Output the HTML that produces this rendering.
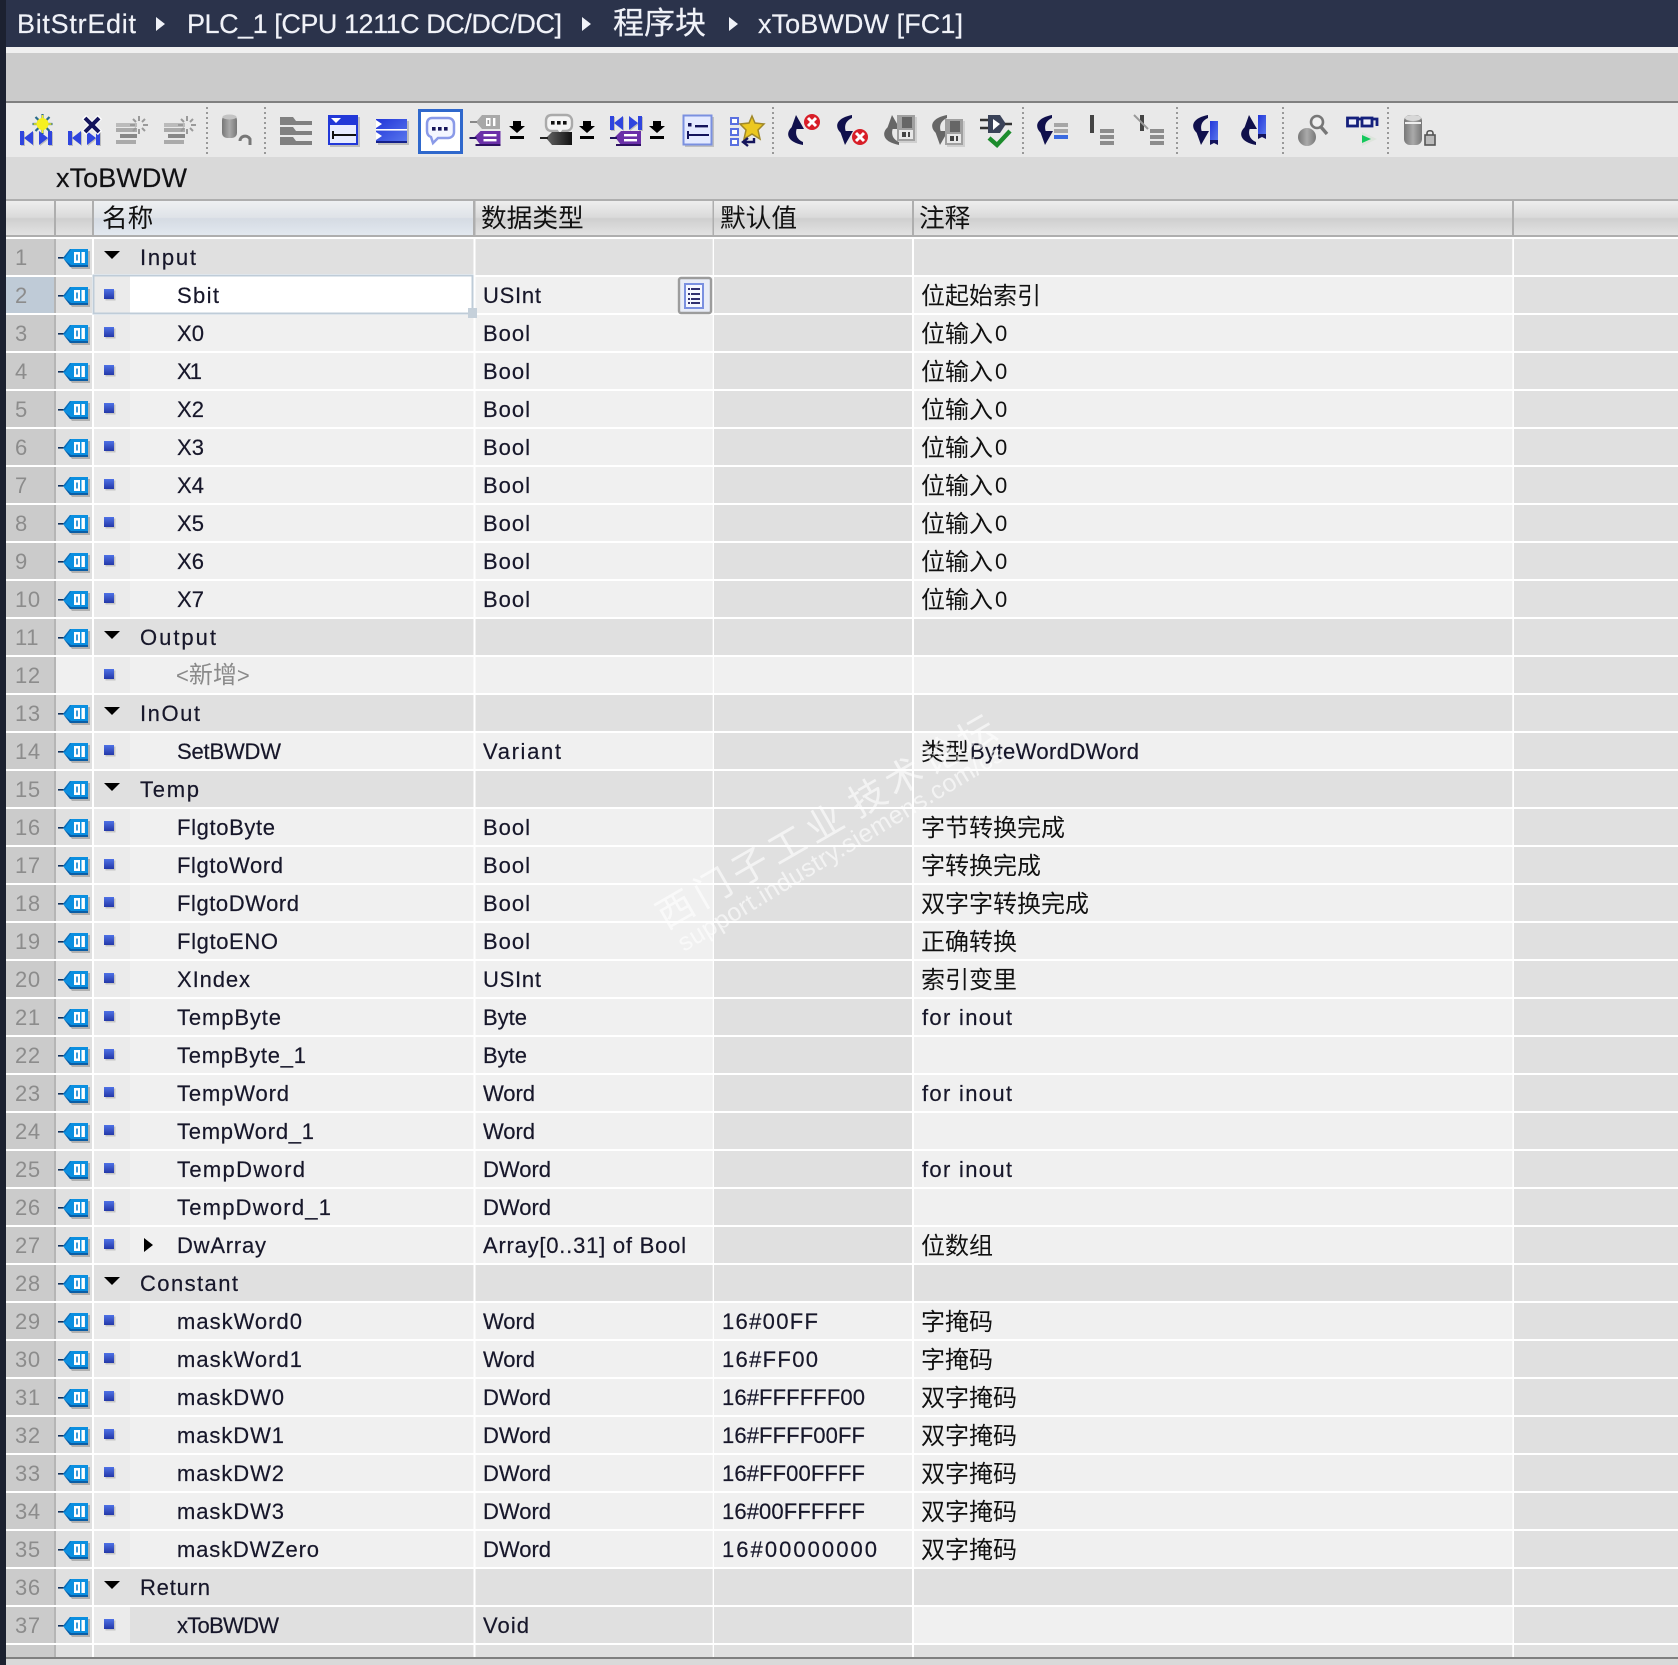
<!DOCTYPE html>
<html><head><meta charset="utf-8"><title>xToBWDW</title>
<style>
html,body{margin:0;padding:0;background:#fff;width:1678px;height:1665px;overflow:hidden}
svg{display:block}
text{font-family:"Liberation Sans","WenQuanYi Zen Hei","Noto Sans CJK SC",sans-serif;font-size:22px;fill:#17172a;stroke:#17172a;stroke-width:.2px}
.n{fill:#8c8c8c;stroke:none;letter-spacing:.6px}
.c{font-size:24px;fill:#111;stroke:none}
.h{font-size:25.7px;fill:#111;stroke:none}
.t{font-size:27px;fill:#f0f2f8;stroke:#f0f2f8}
.g{fill:#8a8a8a;stroke:none}
.w{fill:#fff;fill-opacity:.62;stroke:none}
</style></head><body>
<svg xmlns="http://www.w3.org/2000/svg" width="1678" height="1665" viewBox="0 0 1678 1665">
<defs>
<linearGradient id="hd" x1="0" y1="0" x2="0" y2="1"><stop offset="0" stop-color="#eeeeee"/><stop offset=".48" stop-color="#dadada"/><stop offset=".52" stop-color="#cfcfcf"/><stop offset="1" stop-color="#e2e2e2"/></linearGradient>
<linearGradient id="hb" x1="0" y1="0" x2="0" y2="1"><stop offset="0" stop-color="#eef0f2"/><stop offset=".48" stop-color="#dfe3e8"/><stop offset=".52" stop-color="#d5dbe3"/><stop offset="1" stop-color="#e2e8ef"/></linearGradient>
<linearGradient id="sqg" x1="0" y1="0" x2="0" y2="1"><stop offset="0" stop-color="#4f72e6"/><stop offset="1" stop-color="#2438a8"/></linearGradient>
<linearGradient id="blu" x1="0" y1="0" x2="1" y2="1"><stop offset="0" stop-color="#2236d8"/><stop offset="1" stop-color="#5a78ee"/></linearGradient>
<linearGradient id="cyl" x1="0" y1="0" x2="1" y2="0"><stop offset="0" stop-color="#777"/><stop offset=".5" stop-color="#aaa"/><stop offset="1" stop-color="#777"/></linearGradient>
<linearGradient id="dk" x1="0" y1="0" x2="1" y2="0"><stop offset="0" stop-color="#666"/><stop offset="1" stop-color="#111"/></linearGradient>

<g id="rn"><rect x="6" width="48" height="36" fill="#cbcbcb"/><rect x="54" width="2" height="36" fill="#b5b5b5"/><rect x="56" width="36" height="36" fill="#e0e0e0"/><rect x="94" width="36" height="36" fill="#ebebeb"/><rect x="130" width="343.5" height="36" fill="#f0f0f0"/><rect x="475.5" width="237.2" height="36" fill="#f0f0f0"/><rect x="714" width="198" height="36" fill="#e0e0e0"/><rect x="914" width="598.3" height="36" fill="#f0f0f0"/><rect x="1514" width="164" height="36" fill="#e0e0e0"/></g>
<g id="rc"><use href="#rn"/><rect x="714" width="198" height="36" fill="#f0f0f0"/></g>
<g id="rg"><rect x="6" width="48" height="36" fill="#cbcbcb"/><rect x="54" width="2" height="36" fill="#b5b5b5"/><rect x="56" width="36" height="36" fill="#e0e0e0"/><rect x="94" width="379.5" height="36" fill="#e0e0e0"/><rect x="475.5" width="237.2" height="36" fill="#e0e0e0"/><rect x="714" width="198" height="36" fill="#e0e0e0"/><rect x="914" width="598.3" height="36" fill="#e0e0e0"/><rect x="1514" width="164" height="36" fill="#e0e0e0"/></g>
<g id="tag"><polygon points="65,21 72,12 90,12 90,30 72,30" fill="#b0b0b0"/><rect x="58" y="18" width="6" height="1.6" fill="#10305c"/><polygon points="63,19 70,10 88,10 88,28 70,28" fill="#0b8fe0"/><polygon points="64,20.5 70,28 88,28 88,26 71,26" fill="#0a5ea6"/><polygon points="63,19 70,10 71,10.5 65,19" fill="#0a6cb8"/><rect x="74" y="13" width="6" height="11" fill="#fff"/><rect x="76.2" y="15.5" width="1.6" height="6" fill="#0b7fd0"/><rect x="81.5" y="13" width="3.4" height="11" fill="#fff"/></g>
<g id="sq"><rect x="105.5" y="13.5" width="10" height="10" fill="#c4c4c4"/><rect x="104" y="12" width="10" height="10" fill="url(#sqg)"/></g>
<g id="tr"><polygon points="104,12 120,12 112,20" fill="#000"/></g>
<g id="kh"><path d="M1 1h4v14H1zM5 8l9-7v14zM29 1h4v14h-4zM29 8l-9-7v14z" fill="#bcbcbc"/><path d="M0 0h4v14H0zM4 7l9-7v14zM28 0h4v14h-4zM28 7l-9-7v14z" fill="#2f45de"/></g>
<g id="gs" stroke="#9a9a9a" stroke-width="2" fill="none"><path d="M0-9v5M0 4v5M-9 0h5M4 0h5M-6-6l3 3M3 3l3 3M-6 6l3-3M3-3l3-3"/></g>
<g id="gl"><rect x="0" y="0" width="21" height="4" fill="#bbb"/><rect x="0" y="5" width="21" height="4" fill="#aaa"/><rect x="4" y="11" width="17" height="4" fill="#888"/><rect x="0" y="17" width="20" height="4" fill="#aaa"/></g>
<g id="dl" fill="#000"><path d="M-4 0h8v5h4l-8 7-8-7h4zM-7 15h14v3h-14z"/></g>
<g id="ptag"><polygon points="5,7 11,1 31,1 31,15 11,15" fill="#6a2fa8"/><rect x="0" y="7" width="7" height="2" fill="#20105c"/><rect x="14" y="4" width="13" height="2.4" fill="#fff"/><rect x="14" y="9" width="13" height="2.4" fill="#fff"/><rect x="6" y="14" width="25" height="2" fill="#2c1060"/></g>
<g id="red"><circle r="8" fill="#d81e28"/><path d="M-4-4l8 8M4-4l-8 8" stroke="#fff" stroke-width="3"/></g>
<g id="box"><rect x="2" y="2" width="18" height="26" fill="#cfcfcf"/><rect x="0" y="0" width="18" height="26" fill="#a0a0a0"/><rect x="5" y="2" width="10" height="11" fill="#666"/><rect x="2" y="15" width="14" height="9" fill="#e8e8e8"/><rect x="5" y="17" width="4" height="5" fill="#444"/><rect x="11" y="17" width="2" height="5" fill="#444"/></g>
<g id="cu"><path d="M8 0L16 14H3z"/><path d="M4 12C-3 18-1 27 15 30L15 27C8 24 7 18 9 13z"/></g>
</defs>

<!-- chrome -->
<rect width="1678" height="1665" fill="#fff"/>
<rect width="1678" height="47" fill="#2b334b"/>
<rect x="6" y="47" width="1672" height="6" fill="#f0f0f0"/>
<rect x="6" y="53" width="1672" height="48" fill="#cbcbcb"/>
<rect x="6" y="101" width="1672" height="2" fill="#808080"/>
<rect x="6" y="103" width="1672" height="54" fill="#e9e9e9"/>
<rect x="6" y="157" width="1672" height="42" fill="#d9d9d9"/>
<rect x="6" y="1659" width="1672" height="6" fill="#d9d9d9"/>

<text class="t" x="17" y="33" textLength="119">BitStrEdit</text>
<polygon points="156,17 165,24 156,31" fill="#f0f2f8"/>
<text class="t" x="187" y="33" textLength="375">PLC_1 [CPU 1211C DC/DC/DC]</text>
<polygon points="582,17 591,24 582,31" fill="#f0f2f8"/>
<text class="t" x="613" y="34" style="font-size:31px">程序块</text>
<polygon points="729,17 738,24 729,31" fill="#f0f2f8"/>
<text class="t" x="758" y="33" textLength="205">xToBWDW [FC1]</text>

<!-- toolbar separators -->
<g stroke="#999" stroke-width="2" stroke-dasharray="2 3"><path d="M207 107v47M265 107v47M773 107v47M1023 107v47M1177 107v47M1283 107v47M1388 107v47"/></g>

<!-- icons 1-5 -->
<use href="#kh" x="20" y="131"/>
<path d="M42.5 114v20M32.5 124h20M35.5 117l14 14M49.5 117l-14 14" stroke="#2a6a8a" stroke-width="2.2"/>
<circle cx="42.5" cy="124" r="6" fill="#f6f020"/><path d="M42.5 115v18M33.5 124h18" stroke="#f6f020" stroke-width="1.6"/>
<use href="#kh" x="68" y="131"/>
<path d="M84 117l16 16M100 117l-16 16" stroke="#fff" stroke-width="6"/><path d="M85 118l14 14M99 118l-14 14" stroke="#14145c" stroke-width="4"/>
<use href="#gl" x="116" y="123"/><use href="#gs" x="139" y="125"/>
<use href="#gl" x="164" y="123"/><use href="#gs" x="187" y="125"/>
<rect x="222" y="115" width="15" height="23" rx="5" fill="url(#cyl)"/><ellipse cx="229.5" cy="117" rx="7" ry="2.5" fill="#c4c4c4"/>
<path d="M240 141c0-5 7-7 10-2v6" fill="none" stroke="#777" stroke-width="3"/>

<!-- icons 6-10 -->
<g fill="#808080"><path d="M280 117h13l3 4h16v4h-32zM280 127h13l3 4h16v4h-32zM280 137h13l3 4h16v4h-32z"/></g>
<rect x="330" y="117" width="30" height="30" fill="#bdbdbd"/>
<rect x="328" y="115" width="30" height="30" fill="#2238d8"/><rect x="330" y="125" width="26" height="18" fill="#e8ecff"/><polygon points="331,118 341,118 336,123" fill="#fff"/><path d="M333 135h23" stroke="#111" stroke-width="2"/><path d="M333 131v8" stroke="#111" stroke-width="2"/>
<rect x="378" y="121" width="31" height="24" fill="#bdbdbd"/>
<rect x="376" y="119" width="31" height="24" fill="url(#blu)"/><rect x="376" y="141" width="31" height="2" fill="#14208a"/><rect x="376" y="129" width="31" height="1.6" fill="#fff"/><polygon points="376,120 382,124 376,128" fill="#fff"/><polygon points="376,132 382,136 376,140" fill="#fff"/>
<rect x="419.5" y="110.5" width="42" height="42" fill="#fff" stroke="#2f68cc" stroke-width="3"/>
<path d="M432 118h16c4 0 6 3 6 6v8c0 4-3 6-6 6h-10l-5 5-2-6c-3-1-4-3-4-6v-7c0-4 2-6 5-6z" fill="#f4f6ff" stroke="#8a9ae8" stroke-width="2.5"/>
<rect x="432" y="127" width="3.6" height="3.6" fill="#14145c"/><rect x="438" y="127" width="3.6" height="3.6" fill="#14145c"/><rect x="444" y="127" width="3.6" height="3.6" fill="#14145c"/>
<polygon points="476,122 482,115 500,115 500,129 482,129" fill="#a8a8a8"/><rect x="470" y="121" width="7" height="2" fill="#888"/><rect x="486" y="118" width="4.5" height="8" fill="#fff"/><rect x="487.5" y="120" width="1.6" height="4" fill="#999"/><rect x="493" y="118" width="2.4" height="8" fill="#fff"/>
<use href="#ptag" x="469.5" y="130"/>
<use href="#dl" x="517" y="121"/>

<!-- icons 11-14 -->
<path d="M552 115h14c4 0 6 3 6 6v4c0 4-3 6-6 6h-3l-3 4-3-4h-5c-4 0-6-2-6-6v-4c0-4 2-6 6-6z" fill="#f4f4f4" stroke="#aaa" stroke-width="2.4"/>
<rect x="551" y="121" width="3.6" height="3.6" fill="#111"/><rect x="557" y="121" width="3.6" height="3.6" fill="#111"/><rect x="563" y="121" width="3.6" height="3.6" fill="#111"/>
<polygon points="546,138 552,132 572,132 572,145 552,145" fill="url(#dk)"/><rect x="540" y="137" width="8" height="2" fill="#222"/>
<use href="#dl" x="587" y="121"/>
<use href="#kh" x="610" y="116"/>
<use href="#ptag" x="610" y="130"/>
<use href="#dl" x="657" y="121"/>
<rect x="685" y="117" width="29" height="30" fill="#c0c0c0"/>
<rect x="683.5" y="115.5" width="28" height="29" fill="#e4eaff" stroke="#7a90e0" stroke-width="2"/><rect x="688" y="123" width="3.5" height="3.5" fill="#14145c"/><rect x="695" y="125" width="13" height="2.4" fill="#14145c"/><path d="M688 135h21M688 131v8" stroke="#14145c" stroke-width="2"/>
<g fill="#fff" stroke="#5a70e0" stroke-width="2"><rect x="731" y="118" width="7" height="6"/><rect x="731" y="129" width="7" height="6"/><rect x="731" y="139" width="7" height="6"/></g>
<polygon points="752,116 755,123 764,124 758,130 760,139 752,134 744,139 746,130 740,124 749,123" fill="#ecc820" stroke="#a08828" stroke-width="1.5"/>
<path d="M754 138v4h-10M748 138l-5 4 5 4" fill="none" stroke="#14145c" stroke-width="2.4"/>

<!-- icons 15-19 -->
<use href="#cu" x="788" y="115" fill="#10104c"/>
<use href="#red" x="812" y="122"/>
<use href="#cu" transform="translate(837,145) scale(1,-1)" fill="#10104c"/>
<use href="#red" x="860" y="137"/>
<use href="#cu" x="884" y="115" fill="#666"/>
<use href="#box" x="897" y="115"/>
<use href="#cu" transform="translate(932,145) scale(1,-1)" fill="#666"/>
<use href="#box" x="945" y="119"/>
<path d="M988 115h12l6 9-6 9h-12z" fill="#3a4258"/><polygon points="993,119 1000,124 993,130" fill="#fff"/><path d="M980 120h8M980 128h8M1005 124h7" stroke="#333" stroke-width="2.6"/>
<path d="M989 138l8 7 13-14" fill="none" stroke="#1c8c2c" stroke-width="4.4"/>

<!-- icons 20-24 -->
<use href="#cu" transform="translate(1037,145) scale(1,-1)" fill="#10104c"/>
<rect x="1054" y="123" width="14" height="4" fill="#a6a6a6"/><rect x="1054" y="129" width="14" height="4" fill="#a6a6a6"/><rect x="1054" y="135" width="14" height="4" fill="#3a6ae0"/>
<rect x="1090" y="115" width="4" height="18" fill="#444"/><g fill="#8c8c8c"><rect x="1100" y="129" width="14" height="4"/><rect x="1100" y="135" width="14" height="4"/><rect x="1100" y="141" width="14" height="4"/></g>
<rect x="1140" y="115" width="4" height="16" fill="#444"/><path d="M1134 115l14 14" stroke="#999" stroke-width="2"/><g fill="#8c8c8c"><rect x="1150" y="129" width="14" height="4"/><rect x="1150" y="135" width="14" height="4"/><rect x="1150" y="141" width="14" height="4"/></g>
<use href="#cu" transform="translate(1193,145) scale(1,-1)" fill="#10104c"/>
<rect x="1210" y="121" width="8" height="21" fill="url(#blu)"/><polygon points="1210,140 1218,140 1218,145 1214,143 1210,145" fill="#14145c"/>
<use href="#cu" x="1241" y="115" fill="#10104c"/>
<rect x="1258" y="115" width="8" height="21" fill="url(#blu)"/><polygon points="1258,134 1266,134 1266,139 1262,137 1258,139" fill="#14145c"/>

<!-- icons 25-27 -->
<circle cx="1307" cy="137" r="9" fill="url(#cyl)"/>
<circle cx="1317" cy="122" r="6" fill="#f0f0f0" stroke="#777" stroke-width="2.6"/><path d="M1321 127l6 7" stroke="#777" stroke-width="3.4"/>
<g fill="#eef0fa" stroke="#14207c" stroke-width="2.8"><rect x="1347.5" y="118" width="10" height="8"/><rect x="1362" y="118" width="10" height="8"/><path d="M1357.5 119h4.5M1372 119h5v7" fill="none"/></g>
<polygon points="1362,132 1377,139 1362,146" fill="#dde4dc"/><polygon points="1362,135 1371,139 1362,143" fill="#14c85c"/>
<rect x="1404" y="115" width="18" height="30" rx="6" fill="url(#cyl)"/><ellipse cx="1413" cy="118" rx="8" ry="3" fill="#d8d8d8"/><rect x="1405" y="122" width="16" height="2" fill="#eee"/>
<rect x="1425" y="135" width="10" height="10" fill="#bbb" stroke="#555" stroke-width="1.6"/><path d="M1427 135v-2c0-3 6-3 6 0v2" fill="none" stroke="#555" stroke-width="1.6"/>

<!-- block name -->
<text x="56" y="187" style="font-size:27px;fill:#111" textLength="131">xToBWDW</text>

<!-- header -->
<rect x="6" y="199" width="1672" height="2" fill="#aeaeae"/>
<rect x="6" y="235" width="1672" height="2" fill="#aeaeae"/>
<rect x="6" y="201" width="48" height="34" fill="url(#hd)"/><rect x="54" y="201" width="2" height="34" fill="#aeaeae"/>
<rect x="56" y="201" width="36" height="34" fill="url(#hd)"/><rect x="92" y="201" width="2" height="34" fill="#aeaeae"/>
<rect x="94" y="201" width="379" height="34" fill="url(#hb)"/><rect x="473" y="201" width="2.5" height="34" fill="#aeaeae"/>
<rect x="475.5" y="201" width="237" height="34" fill="url(#hd)"/><rect x="712.5" y="201" width="1.5" height="34" fill="#aeaeae"/>
<rect x="714" y="201" width="198" height="34" fill="url(#hd)"/><rect x="912" y="201" width="2" height="34" fill="#aeaeae"/>
<rect x="914" y="201" width="598" height="34" fill="url(#hd)"/><rect x="1512" y="201" width="2" height="34" fill="#aeaeae"/>
<rect x="1514" y="201" width="164" height="34" fill="url(#hd)"/>
<text class="h" x="102" y="227">名称</text>
<text class="h" x="481" y="227">数据类型</text>
<text class="h" x="720" y="227">默认值</text>
<text class="h" x="919" y="227">注释</text>

<!-- row backgrounds -->
<use href="#rg" y="239"/><use href="#rn" y="277"/><use href="#rn" y="315"/><use href="#rn" y="353"/><use href="#rn" y="391"/><use href="#rn" y="429"/><use href="#rn" y="467"/><use href="#rn" y="505"/><use href="#rn" y="543"/><use href="#rn" y="581"/>
<use href="#rg" y="619"/><use href="#rc" y="657"/><rect x="56" y="657" width="36" height="36" fill="#f0f0f0"/>
<use href="#rg" y="695"/><use href="#rn" y="733"/><use href="#rg" y="771"/>
<use href="#rn" y="809"/><use href="#rn" y="847"/><use href="#rn" y="885"/><use href="#rn" y="923"/><use href="#rn" y="961"/><use href="#rn" y="999"/><use href="#rn" y="1037"/><use href="#rn" y="1075"/><use href="#rn" y="1113"/><use href="#rn" y="1151"/><use href="#rn" y="1189"/><use href="#rn" y="1227"/>
<use href="#rg" y="1265"/>
<use href="#rc" y="1303"/><use href="#rc" y="1341"/><use href="#rc" y="1379"/><use href="#rc" y="1417"/><use href="#rc" y="1455"/><use href="#rc" y="1493"/><use href="#rc" y="1531"/>
<use href="#rg" y="1569"/>
<use href="#rg" y="1607"/><rect x="94" y="1607" width="36" height="36" fill="#ebebeb"/><rect x="914" y="1607" width="598.3" height="36" fill="#f0f0f0"/>
<!-- partial last row -->
<g><rect x="6" y="1645" width="48" height="12" fill="#cbcbcb"/><rect x="54" y="1645" width="2" height="12" fill="#b5b5b5"/><rect x="56" y="1645" width="36" height="12" fill="#e0e0e0"/><rect x="94" y="1645" width="379.5" height="12" fill="#e0e0e0"/><rect x="475.5" y="1645" width="237.2" height="12" fill="#e0e0e0"/><rect x="714" y="1645" width="198" height="12" fill="#e0e0e0"/><rect x="914" y="1645" width="598.3" height="12" fill="#e0e0e0"/><rect x="1514" y="1645" width="164" height="12" fill="#e0e0e0"/></g>
<rect x="6" y="1657" width="1672" height="2" fill="#808080"/>

<!-- selection -->
<rect x="6" y="277" width="48" height="36" fill="#bfcbd7"/>
<rect x="92" y="274" width="382" height="41" fill="#fff"/>
<rect x="93.5" y="275.5" width="379" height="38" fill="#fff" stroke="#bfccd8" stroke-width="2"/>
<rect x="94.5" y="276.5" width="35.5" height="36" fill="#ebebeb"/>
<rect x="468" y="308" width="9" height="10" fill="#c5d0da"/>

<!-- rows -->
<g transform="translate(0,239)"><text class="n" x="15" y="26">1</text><use href="#tag"/><use href="#tr"/><text x="140" y="26" textLength="56">Input</text></g>
<g transform="translate(0,277)"><text class="n" x="15" y="26">2</text><use href="#tag"/><use href="#sq"/><text x="177" y="26" textLength="42">Sbit</text><text x="483" y="26" textLength="58">USInt</text><text class="c" x="921" y="27">位起始索引</text>
<rect x="679" y="1" width="32" height="35" rx="2" fill="#e8ecf6" stroke="#9c9c9c" stroke-width="2.4"/><rect x="685" y="7" width="18" height="24" fill="#f6f8ff" stroke="#7a90e0" stroke-width="2"/><path d="M691 12h9M691 17h9M691 22h9M691 26h9" stroke="#14145c" stroke-width="1.8"/><path d="M688 12h2M688 17h2M688 22h2M688 26h2" stroke="#14145c" stroke-width="1.8"/></g>
<g transform="translate(0,315)"><text class="n" x="15" y="26">3</text><use href="#tag"/><use href="#sq"/><text x="177" y="26" textLength="27">X0</text><text x="483" y="26" textLength="47">Bool</text><text class="c" x="921" y="27">位输入<tspan x="995" y="26" style="font-size:22px">0</tspan></text></g>
<g transform="translate(0,353)"><text class="n" x="15" y="26">4</text><use href="#tag"/><use href="#sq"/><text x="177" y="26" textLength="25">X1</text><text x="483" y="26" textLength="47">Bool</text><text class="c" x="921" y="27">位输入<tspan x="995" y="26" style="font-size:22px">0</tspan></text></g>
<g transform="translate(0,391)"><text class="n" x="15" y="26">5</text><use href="#tag"/><use href="#sq"/><text x="177" y="26" textLength="27">X2</text><text x="483" y="26" textLength="47">Bool</text><text class="c" x="921" y="27">位输入<tspan x="995" y="26" style="font-size:22px">0</tspan></text></g>
<g transform="translate(0,429)"><text class="n" x="15" y="26">6</text><use href="#tag"/><use href="#sq"/><text x="177" y="26" textLength="27">X3</text><text x="483" y="26" textLength="47">Bool</text><text class="c" x="921" y="27">位输入<tspan x="995" y="26" style="font-size:22px">0</tspan></text></g>
<g transform="translate(0,467)"><text class="n" x="15" y="26">7</text><use href="#tag"/><use href="#sq"/><text x="177" y="26" textLength="27">X4</text><text x="483" y="26" textLength="47">Bool</text><text class="c" x="921" y="27">位输入<tspan x="995" y="26" style="font-size:22px">0</tspan></text></g>
<g transform="translate(0,505)"><text class="n" x="15" y="26">8</text><use href="#tag"/><use href="#sq"/><text x="177" y="26" textLength="27">X5</text><text x="483" y="26" textLength="47">Bool</text><text class="c" x="921" y="27">位输入<tspan x="995" y="26" style="font-size:22px">0</tspan></text></g>
<g transform="translate(0,543)"><text class="n" x="15" y="26">9</text><use href="#tag"/><use href="#sq"/><text x="177" y="26" textLength="27">X6</text><text x="483" y="26" textLength="47">Bool</text><text class="c" x="921" y="27">位输入<tspan x="995" y="26" style="font-size:22px">0</tspan></text></g>
<g transform="translate(0,581)"><text class="n" x="15" y="26">10</text><use href="#tag"/><use href="#sq"/><text x="177" y="26" textLength="27">X7</text><text x="483" y="26" textLength="47">Bool</text><text class="c" x="921" y="27">位输入<tspan x="995" y="26" style="font-size:22px">0</tspan></text></g>
<g transform="translate(0,619)"><text class="n" x="15" y="26">11</text><use href="#tag"/><use href="#tr"/><text x="140" y="26" textLength="76">Output</text></g>
<g transform="translate(0,657)"><text class="n" x="15" y="26">12</text><use href="#sq"/><text class="g" x="176" y="26">&lt;<tspan style="font-size:24px">新增</tspan>&gt;</text></g>
<g transform="translate(0,695)"><text class="n" x="15" y="26">13</text><use href="#tag"/><use href="#tr"/><text x="140" y="26" textLength="60">InOut</text></g>
<g transform="translate(0,733)"><text class="n" x="15" y="26">14</text><use href="#tag"/><use href="#sq"/><text x="177" y="26" textLength="104">SetBWDW</text><text x="483" y="26" textLength="78">Variant</text><text class="c" x="921" y="27">类型</text><text x="970" y="26" textLength="169">ByteWordDWord</text></g>
<g transform="translate(0,771)"><text class="n" x="15" y="26">15</text><use href="#tag"/><use href="#tr"/><text x="140" y="26" textLength="59">Temp</text></g>
<g transform="translate(0,809)"><text class="n" x="15" y="26">16</text><use href="#tag"/><use href="#sq"/><text x="177" y="26" textLength="98">FlgtoByte</text><text x="483" y="26" textLength="47">Bool</text><text class="c" x="921" y="27">字节转换完成</text></g>
<g transform="translate(0,847)"><text class="n" x="15" y="26">17</text><use href="#tag"/><use href="#sq"/><text x="177" y="26" textLength="106">FlgtoWord</text><text x="483" y="26" textLength="47">Bool</text><text class="c" x="921" y="27">字转换完成</text></g>
<g transform="translate(0,885)"><text class="n" x="15" y="26">18</text><use href="#tag"/><use href="#sq"/><text x="177" y="26" textLength="122">FlgtoDWord</text><text x="483" y="26" textLength="47">Bool</text><text class="c" x="921" y="27">双字字转换完成</text></g>
<g transform="translate(0,923)"><text class="n" x="15" y="26">19</text><use href="#tag"/><use href="#sq"/><text x="177" y="26" textLength="101">FlgtoENO</text><text x="483" y="26" textLength="47">Bool</text><text class="c" x="921" y="27">正确转换</text></g>
<g transform="translate(0,961)"><text class="n" x="15" y="26">20</text><use href="#tag"/><use href="#sq"/><text x="177" y="26" textLength="73">XIndex</text><text x="483" y="26" textLength="58">USInt</text><text class="c" x="921" y="27">索引变里</text></g>
<g transform="translate(0,999)"><text class="n" x="15" y="26">21</text><use href="#tag"/><use href="#sq"/><text x="177" y="26" textLength="104">TempByte</text><text x="483" y="26" textLength="44">Byte</text><text x="922" y="26" textLength="90">for inout</text></g>
<g transform="translate(0,1037)"><text class="n" x="15" y="26">22</text><use href="#tag"/><use href="#sq"/><text x="177" y="26" textLength="129">TempByte_1</text><text x="483" y="26" textLength="44">Byte</text></g>
<g transform="translate(0,1075)"><text class="n" x="15" y="26">23</text><use href="#tag"/><use href="#sq"/><text x="177" y="26" textLength="112">TempWord</text><text x="483" y="26" textLength="52">Word</text><text x="922" y="26" textLength="90">for inout</text></g>
<g transform="translate(0,1113)"><text class="n" x="15" y="26">24</text><use href="#tag"/><use href="#sq"/><text x="177" y="26" textLength="137">TempWord_1</text><text x="483" y="26" textLength="52">Word</text></g>
<g transform="translate(0,1151)"><text class="n" x="15" y="26">25</text><use href="#tag"/><use href="#sq"/><text x="177" y="26" textLength="128">TempDword</text><text x="483" y="26" textLength="68">DWord</text><text x="922" y="26" textLength="90">for inout</text></g>
<g transform="translate(0,1189)"><text class="n" x="15" y="26">26</text><use href="#tag"/><use href="#sq"/><text x="177" y="26" textLength="154">TempDword_1</text><text x="483" y="26" textLength="68">DWord</text></g>
<g transform="translate(0,1227)"><text class="n" x="15" y="26">27</text><use href="#tag"/><use href="#sq"/><polygon points="144,11 144,25 153,18" fill="#000"/><text x="177" y="26" textLength="89">DwArray</text><text x="483" y="26" textLength="203">Array[0..31] of Bool</text><text class="c" x="921" y="27">位数组</text></g>
<g transform="translate(0,1265)"><text class="n" x="15" y="26">28</text><use href="#tag"/><use href="#tr"/><text x="140" y="26" textLength="98">Constant</text></g>
<g transform="translate(0,1303)"><text class="n" x="15" y="26">29</text><use href="#tag"/><use href="#sq"/><text x="177" y="26" textLength="125">maskWord0</text><text x="483" y="26" textLength="52">Word</text><text x="722" y="26" textLength="96">16#00FF</text><text class="c" x="921" y="27">字掩码</text></g>
<g transform="translate(0,1341)"><text class="n" x="15" y="26">30</text><use href="#tag"/><use href="#sq"/><text x="177" y="26" textLength="125">maskWord1</text><text x="483" y="26" textLength="52">Word</text><text x="722" y="26" textLength="96">16#FF00</text><text class="c" x="921" y="27">字掩码</text></g>
<g transform="translate(0,1379)"><text class="n" x="15" y="26">31</text><use href="#tag"/><use href="#sq"/><text x="177" y="26" textLength="107">maskDW0</text><text x="483" y="26" textLength="68">DWord</text><text x="722" y="26" textLength="143">16#FFFFFF00</text><text class="c" x="921" y="27">双字掩码</text></g>
<g transform="translate(0,1417)"><text class="n" x="15" y="26">32</text><use href="#tag"/><use href="#sq"/><text x="177" y="26" textLength="107">maskDW1</text><text x="483" y="26" textLength="68">DWord</text><text x="722" y="26" textLength="143">16#FFFF00FF</text><text class="c" x="921" y="27">双字掩码</text></g>
<g transform="translate(0,1455)"><text class="n" x="15" y="26">33</text><use href="#tag"/><use href="#sq"/><text x="177" y="26" textLength="107">maskDW2</text><text x="483" y="26" textLength="68">DWord</text><text x="722" y="26" textLength="143">16#FF00FFFF</text><text class="c" x="921" y="27">双字掩码</text></g>
<g transform="translate(0,1493)"><text class="n" x="15" y="26">34</text><use href="#tag"/><use href="#sq"/><text x="177" y="26" textLength="107">maskDW3</text><text x="483" y="26" textLength="68">DWord</text><text x="722" y="26" textLength="143">16#00FFFFFF</text><text class="c" x="921" y="27">双字掩码</text></g>
<g transform="translate(0,1531)"><text class="n" x="15" y="26">35</text><use href="#tag"/><use href="#sq"/><text x="177" y="26" textLength="142">maskDWZero</text><text x="483" y="26" textLength="68">DWord</text><text x="722" y="26" textLength="155">16#00000000</text><text class="c" x="921" y="27">双字掩码</text></g>
<g transform="translate(0,1569)"><text class="n" x="15" y="26">36</text><use href="#tag"/><use href="#tr"/><text x="140" y="26" textLength="70">Return</text></g>
<g transform="translate(0,1607)"><text class="n" x="15" y="26">37</text><use href="#tag"/><use href="#sq"/><text x="177" y="26" textLength="102">xToBWDW</text><text x="483" y="26" textLength="46">Void</text></g>
<rect x="0" width="6" height="1665" fill="#1c2130"/>

<!-- watermark -->
<text class="w" transform="translate(666,930) rotate(-30)" style="font-size:37px;letter-spacing:6px">西门子工业</text>
<text class="w" transform="translate(858,818) rotate(-30)" style="font-size:37px;letter-spacing:5px">技术论坛</text>
<text class="w" transform="translate(684,952) rotate(-31)" style="font-size:25px" textLength="375">support.industry.siemens.com/cs</text>
</svg>
</body></html>
